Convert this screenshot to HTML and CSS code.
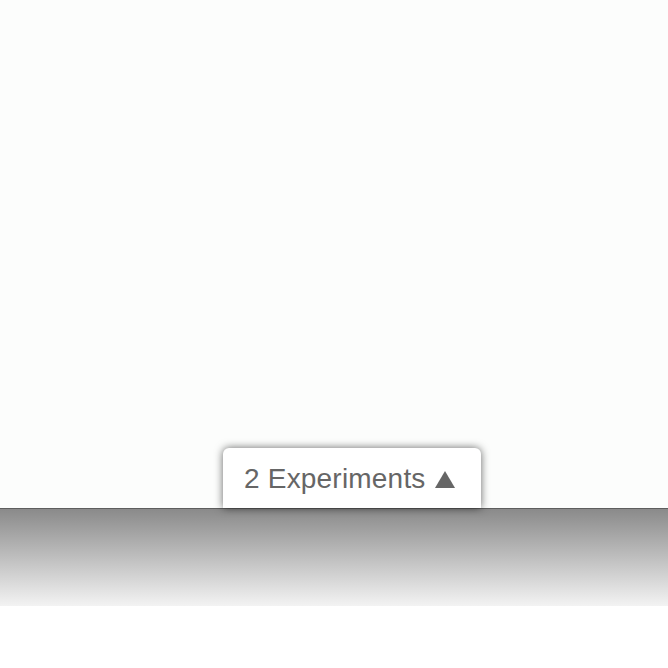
FILE: index.html
```html
<!DOCTYPE html>
<html>
  <head>
    <title>Experiments</title>
    <meta charset="utf-8">
    <link rel="stylesheet" href="styles.css">
  </head>
  <body>
    <div class="stage">
      <div class="tab">2 Experiments<span class="arrow"></span></div>
    </div>
    <div class="drawer"></div>
  </body>
</html>
```

FILE: styles.css
```css
body
{
  margin: 0;
  background: #ffffff;
  font-family: "Liberation Sans", Arial, sans-serif;
}

.stage
{
  height: 508px;
  background: #fcfdfc;
  display: flex;
  align-items: flex-end;
  padding-left: 223px;
  box-sizing: border-box;
}

.tab
{
  width: 258px;
  height: 60px;
  box-sizing: border-box;
  padding: 16px 0 0 21px;
  background: #ffffff;
  border-radius: 6px 6px 0 0;
  box-shadow: 0 0 8px rgba(0, 0, 0, 0.6);
  color: #666666;
  font-size: 28px;
  letter-spacing: 0.2px;
  line-height: 30px;
  white-space: nowrap;
}

.arrow
{
  display: inline-block;
  width: 0;
  height: 0;
  margin-left: 9px;
  border-left: 10px solid transparent;
  border-right: 10px solid transparent;
  border-bottom: 17px solid #666666;
}

.drawer
{
  height: 97px;
  border-top: 1px solid #5e5e5e;
  background: linear-gradient(#8a8a8a, #f3f3f3);
}
```
